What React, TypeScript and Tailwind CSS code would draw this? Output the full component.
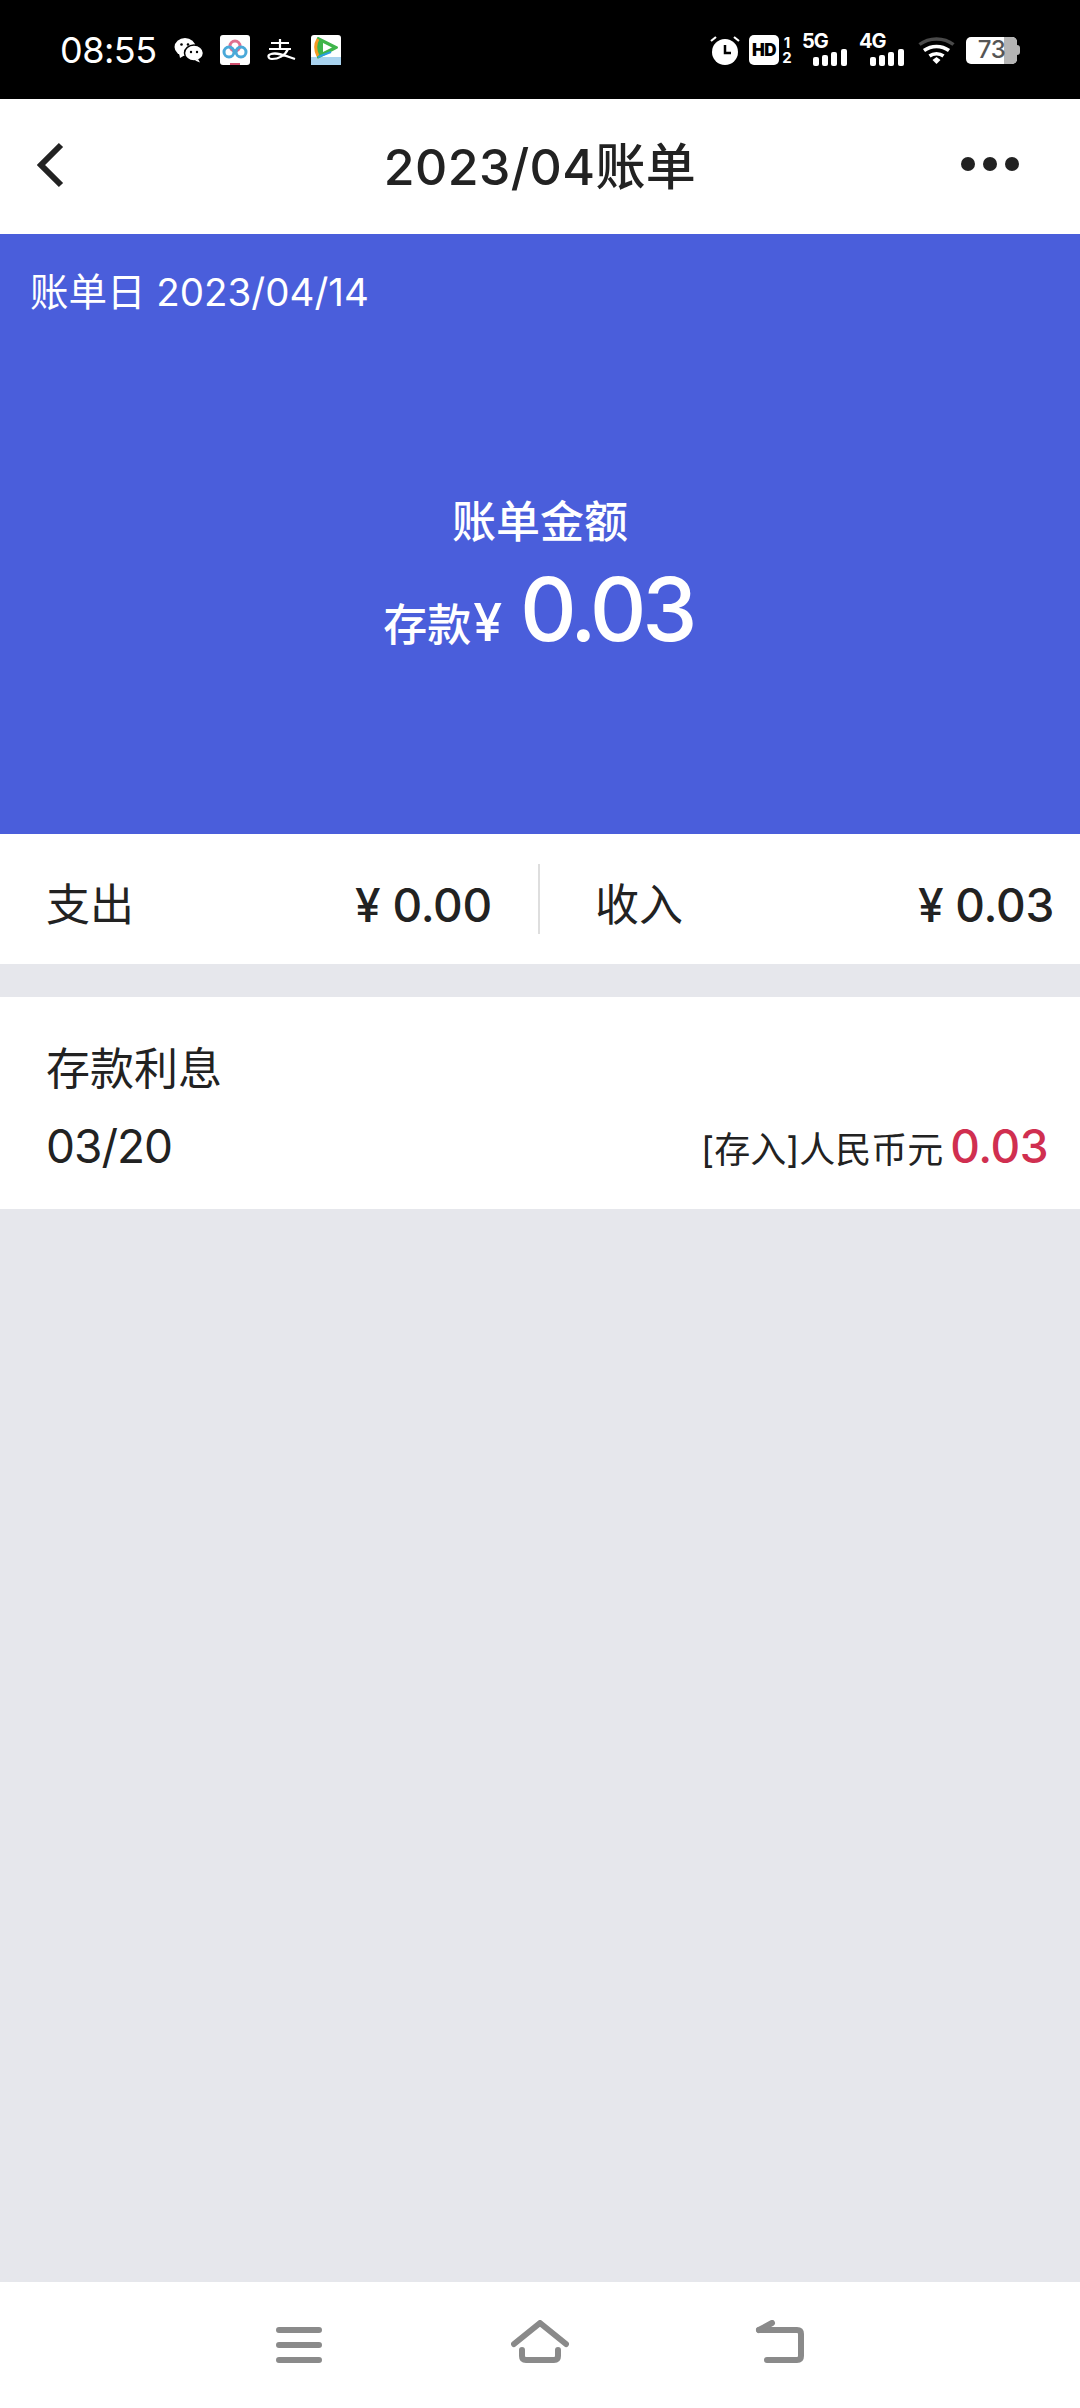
import React from 'react';

const fontStack = { fontFamily: 'Inter, "Noto Sans CJK SC", sans-serif' };

const Bars: React.FC = () => (
  <svg width="36" height="18" viewBox="0 0 36 18" className="block">
    <rect x="1" y="9" width="6" height="9" rx="2" fill="#fff" />
    <rect x="10" y="7" width="6" height="11" rx="2" fill="#fff" />
    <rect x="19" y="4" width="6" height="14" rx="2" fill="#fff" />
    <rect x="29" y="1" width="6" height="17" rx="2" fill="#fff" />
  </svg>
);

const Signal: React.FC<{ label: string; className?: string }> = ({ label, className }) => (
  <div className={`relative w-[46px] h-[32px] ${className ?? ''}`}>
    <span className="absolute left-0 top-[-5px] text-[20px] leading-[24px] font-bold tracking-[-1px] text-white">{label}</span>
    <div className="absolute right-0 bottom-0"><Bars /></div>
  </div>
);

const StatusBar: React.FC = () => (
  <div className="h-[99px] bg-black flex items-center justify-between pl-[60px] pr-[60px] pt-[1px]">
    <div className="flex items-center">
      <span className="text-[36px] leading-none text-white w-[94px] tracking-[-0.5px]">08:55</span>
      {/* wechat */}
      <svg width="30" height="26" viewBox="0 0 30 26" className="ml-[20px]">
        <ellipse cx="11" cy="10" rx="10.5" ry="9" fill="#fff" />
        <path d="M5 16l1 5 5-3z" fill="#fff" />
        <ellipse cx="20" cy="16" rx="9.5" ry="8" fill="#fff" stroke="#000" strokeWidth="1.5" />
        <path d="M24 22l2 3.5-5-2z" fill="#fff" />
        <circle cx="7.5" cy="7.5" r="1.3" fill="#000" />
        <circle cx="14" cy="7.5" r="1.3" fill="#000" />
        <circle cx="17" cy="15" r="1.2" fill="#000" />
        <circle cx="23" cy="15" r="1.2" fill="#000" />
      </svg>
      {/* cloud drive */}
      <svg width="30" height="30" viewBox="0 0 30 30" className="ml-[16px]">
        <rect width="30" height="30" rx="3" fill="#fff" />
        <circle cx="15" cy="11" r="5" fill="none" stroke="#e0708f" strokeWidth="3" />
        <circle cx="9" cy="17" r="5" fill="none" stroke="#4aa9d9" strokeWidth="3" />
        <circle cx="21" cy="17" r="5" fill="none" stroke="#4aa9d9" strokeWidth="3" />
        <rect x="10" y="28" width="10" height="2" fill="#d0506f" />
      </svg>
      {/* alipay */}
      <svg width="30" height="24" viewBox="0 0 30 24" className="ml-[16px]" fill="none" stroke="#fff" strokeWidth="2.2">
        <path d="M5 5h18M14 1v9M3 11h22" />
        <path d="M22 11c-3 7-10 10-16 10-4 0-5-4-1-5 7-2 15 2 24 5" />
      </svg>
      {/* tencent video */}
      <svg width="30" height="30" viewBox="0 0 30 30" className="ml-[15px]">
        <rect width="30" height="30" rx="3" fill="#fff" />
        <rect y="22" width="30" height="8" fill="#a9d3ef" />
        <path d="M7 3l19 9.500-19 10z" fill="#3fb54a" stroke="#3fb54a" strokeWidth="2" strokeLinejoin="round" />
        <path d="M7 4c-3 5-3 11 0 17" fill="none" stroke="#f59a23" strokeWidth="3" />
        <path d="M12 8l9 4.500-9 4.500z" fill="#fff" />
        <path d="M7 22l13-5" stroke="#2a9fe0" strokeWidth="2" />
      </svg>
    </div>
    <div className="flex items-center">
      {/* alarm */}
      <svg width="30" height="30" viewBox="0 0 30 30">
        <circle cx="15" cy="17" r="13" fill="#fff" />
        <path d="M15 10v8h6" fill="none" stroke="#000" strokeWidth="2.5" />
        <path d="M1 6l5-4M29 6l-5-4" stroke="#fff" strokeWidth="2.2" />
      </svg>
      {/* hd */}
      <div className="ml-[9px] w-[30px] h-[30px] rounded-[5px] bg-white flex items-center justify-center">
        <span className="text-[17px] leading-none font-black tracking-[-0.5px] text-black">HD</span>
      </div>
      <div className="ml-[2px] w-[12px] flex flex-col items-center text-white font-bold text-[15px] leading-[15px]">
        <span>1</span>
        <span>2</span>
      </div>
      <Signal label="5G" className="ml-[9px]" />
      <Signal label="4G" className="ml-[11px]" />
      {/* wifi */}
      <svg width="37" height="28" viewBox="0 0 37 28" fill="none" className="ml-[13px]">
        <path d="M1.500 8.500C11 1 26 1 35.500 8.500" stroke="#4a4a4a" strokeWidth="3.500" />
        <path d="M6 14.500c7.500-5.500 17.500-5.500 25 0" stroke="#fff" strokeWidth="3.500" />
        <path d="M11.500 20c4-3 10-3 14 0" stroke="#fff" strokeWidth="3.500" />
        <path d="M14.500 24l4-3 4 3-4 4z" fill="#fff" />
      </svg>
      {/* battery */}
      <div className="ml-[11px] relative w-[51px] h-[27px] rounded-[5px] bg-white overflow-hidden flex items-center justify-center">
        <div className="absolute right-0 top-0 bottom-0 w-[13px] bg-[#b5b5b5]" />
        <span className="relative text-[24px] leading-none font-medium tracking-[-0.5px] text-[#555]">73</span>
      </div>
      <div className="w-[3px] h-[10px] rounded-r-[3px] bg-[#b5b5b5]" />
    </div>
  </div>
);

const Header: React.FC = () => (
  <div className="h-[135px] bg-white flex items-center px-[37px]">
    <div className="flex-1">
      <svg width="27" height="46" viewBox="0 0 27 46" fill="none" className="block mb-[4px]">
        <path d="M24 3L4 23l20 20" stroke="#222" strokeWidth="6" />
      </svg>
    </div>
    <h1 className="text-[50px] leading-none font-medium tracking-[0.4px] text-[#222]">2023/04账单</h1>
    <div className="flex-1 flex justify-end">
      <div className="flex gap-[8px] mb-[5px] mr-[24px]">
        <span className="w-[14px] h-[14px] rounded-full bg-[#222]" />
        <span className="w-[14px] h-[14px] rounded-full bg-[#222]" />
        <span className="w-[14px] h-[14px] rounded-full bg-[#222]" />
      </div>
    </div>
  </div>
);

const Summary: React.FC = () => (
  <div className="h-[600px] bg-[#4a5edb] text-white flex flex-col">
    <div className="pl-[30px] pt-[36px] text-[38.500px] leading-[44px]">账单日 2023/04/14</div>
    <div className="flex flex-col items-center mt-[181px]">
      <div className="text-[44px] leading-[54px] font-medium">账单金额</div>
      <div className="flex items-baseline mt-[14px] pr-[4px] font-medium">
        <span className="text-[44px] leading-none">存款</span>
        <span className="text-[52px] leading-none ml-[2px]">¥</span>
        <span className="text-[88px] leading-[92px] ml-[18px] tracking-[-4.500px]">0.03</span>
      </div>
    </div>
  </div>
);

const Totals: React.FC = () => (
  <div className="h-[130px] bg-white flex items-center text-[#222]">
    <div className="w-[538px] flex items-center justify-between pl-[46px] pr-[46px] pt-[12px]">
      <span className="text-[44px] leading-none">支出</span>
      <span className="text-[46px] leading-none font-medium tracking-[-0.25px]">¥ 0.00</span>
    </div>
    <div className="w-[2px] h-[70px] bg-[#dedede]" />
    <div className="flex-1 flex items-center justify-between pl-[55px] pr-[26px] pt-[12px]">
      <span className="text-[44px] leading-none">收入</span>
      <span className="text-[46px] leading-none font-medium tracking-[-0.25px]">¥ 0.03</span>
    </div>
  </div>
);

const Transaction: React.FC = () => (
  <div className="h-[212px] bg-white mt-[33px] pl-[46px] pr-[32px] pt-[46px] text-[#222]">
    <div className="text-[44px] leading-[52px]">存款利息</div>
    <div className="flex items-baseline justify-between mt-[24px]">
      <span className="text-[46px] leading-[54px] tracking-[-1px]">03/20</span>
      <div className="flex items-baseline">
        <span className="text-[36px] leading-none">[存入]人民币元</span>
        <span className="text-[46px] leading-none font-medium tracking-[-0.5px] text-[#d02f50] ml-[7px]">0.03</span>
      </div>
    </div>
  </div>
);

const NavBar: React.FC = () => (
  <div className="h-[126px] bg-white flex items-start justify-center pt-[38px]">
    <svg width="46" height="44" viewBox="0 0 46 44" fill="none" stroke="#8a8a8a" strokeWidth="6" strokeLinecap="round">
      <path d="M3 10h40M3 25h40M3 40h40" />
    </svg>
    <svg width="58" height="44" viewBox="0 0 58 44" fill="none" stroke="#8a8a8a" strokeWidth="6" strokeLinecap="round" strokeLinejoin="round" className="ml-[189px]">
      <path d="M3 24L29 3l26 21" />
      <path d="M11 30v6q0 4 4 4h28q4 0 4-4v-6" />
    </svg>
    <svg width="50" height="44" viewBox="0 0 50 44" fill="none" stroke="#8a8a8a" strokeWidth="6" strokeLinecap="round" strokeLinejoin="round" className="ml-[186px]">
      <path d="M4 10h38q4 0 4 4v22q0 4-4 4H12" />
      <path d="M4 10l13-7" />
    </svg>
  </div>
);

const App: React.FC = () => {
  return (
    <div className="w-[1080px] h-[2408px] bg-[#e6e7ec] flex flex-col" style={fontStack}>
      <StatusBar />
      <Header />
      <Summary />
      <Totals />
      <Transaction />
      <div className="flex-1" />
      <NavBar />
    </div>
  );
};

export default App;
